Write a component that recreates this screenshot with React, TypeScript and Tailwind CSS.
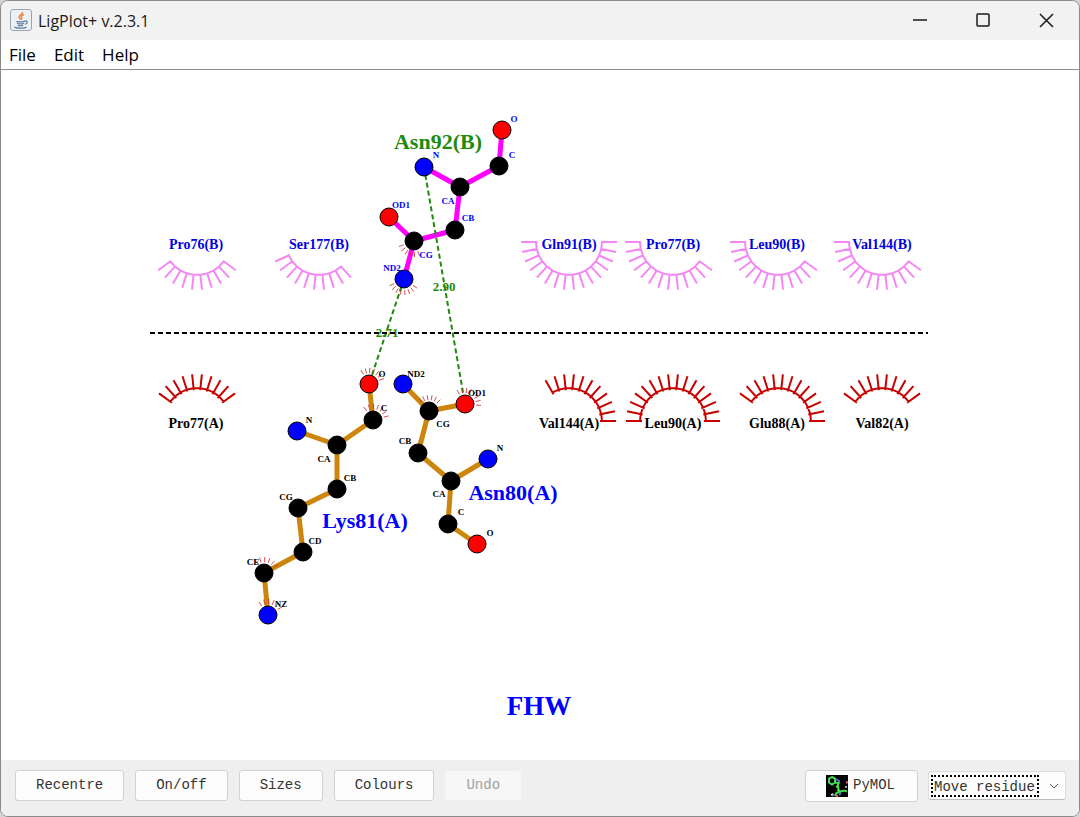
import React, { useState } from 'react';

type Point = [number, number];

interface Atom {
    at: Point;
    color: string;
    label: string;
    labelAt: Point;
    // start and end angle of the contact spikes, in degrees, y pointing down
    spikes?: [number, number];
}

interface Residue {
    name: string;
    nameAt: Point;
    nameColor: string;
    bondColor: string;
    labelColor: string;
    atoms: Atom[];
    bonds: [number, number][];
}

const CARBON = '#000000';
const NITROGEN = '#0000ff';
const OXYGEN = '#ff0000';

const residues: Residue[] = [
    {
        name: 'Asn92(B)',
        nameAt: [438, 149],
        nameColor: '#1f8a0c',
        bondColor: '#ff00ff',
        labelColor: '#0000ff',
        atoms: [
            { at: [424, 167], color: NITROGEN, label: 'N', labelAt: [436, 158] },
            { at: [460, 187], color: CARBON, label: 'CA', labelAt: [448, 204] },
            { at: [499, 166], color: CARBON, label: 'C', labelAt: [512, 158] },
            { at: [502, 130], color: OXYGEN, label: 'O', labelAt: [514, 122] },
            { at: [455, 230], color: CARBON, label: 'CB', labelAt: [468, 221] },
            { at: [414, 241], color: CARBON, label: 'CG', labelAt: [426, 258], spikes: [70, 160] },
            { at: [389, 217], color: OXYGEN, label: 'OD1', labelAt: [401, 208] },
            { at: [404, 279], color: NITROGEN, label: 'ND2', labelAt: [392, 271], spikes: [35, 155] },
        ],
        bonds: [[0, 1], [1, 2], [2, 3], [1, 4], [4, 5], [5, 6], [5, 7]],
    },
    {
        name: 'Lys81(A)',
        nameAt: [365, 528],
        nameColor: '#0000ff',
        bondColor: '#cd850c',
        labelColor: '#000000',
        atoms: [
            { at: [369, 384], color: OXYGEN, label: 'O', labelAt: [382, 377], spikes: [-120, -20] },
            { at: [373, 420], color: CARBON, label: 'C', labelAt: [384, 411], spikes: [-125, -15] },
            { at: [337, 445], color: CARBON, label: 'CA', labelAt: [324, 462] },
            { at: [297, 431], color: NITROGEN, label: 'N', labelAt: [309, 423] },
            { at: [337, 489], color: CARBON, label: 'CB', labelAt: [350, 481] },
            { at: [298, 508], color: CARBON, label: 'CG', labelAt: [286, 500] },
            { at: [303, 552], color: CARBON, label: 'CD', labelAt: [315, 544] },
            { at: [264, 573], color: CARBON, label: 'CE', labelAt: [253, 565], spikes: [-125, -30] },
            { at: [268, 615], color: NITROGEN, label: 'NZ', labelAt: [281, 607], spikes: [-125, -30] },
        ],
        bonds: [[0, 1], [1, 2], [2, 3], [2, 4], [4, 5], [5, 6], [6, 7], [7, 8]],
    },
    {
        name: 'Asn80(A)',
        nameAt: [513, 500],
        nameColor: '#0000ff',
        bondColor: '#cd850c',
        labelColor: '#000000',
        atoms: [
            { at: [403, 384], color: NITROGEN, label: 'ND2', labelAt: [416, 377] },
            { at: [429, 411], color: CARBON, label: 'CG', labelAt: [443, 427], spikes: [-130, -45] },
            { at: [465, 404], color: OXYGEN, label: 'OD1', labelAt: [477, 396], spikes: [-120, 5] },
            { at: [418, 453], color: CARBON, label: 'CB', labelAt: [405, 444] },
            { at: [451, 481], color: CARBON, label: 'CA', labelAt: [439, 497] },
            { at: [488, 459], color: NITROGEN, label: 'N', labelAt: [500, 451] },
            { at: [448, 524], color: CARBON, label: 'C', labelAt: [461, 515] },
            { at: [477, 544], color: OXYGEN, label: 'O', labelAt: [490, 536] },
        ],
        bonds: [[0, 1], [1, 2], [1, 3], [3, 4], [4, 5], [4, 6], [6, 7]],
    },
];

const hydrogenBonds: { from: Point; to: Point; length: string; labelAt: Point }[] = [
    { from: [424, 167], to: [465, 404], length: '2.90', labelAt: [444, 291] },
    { from: [404, 279], to: [369, 384], length: '2.71', labelAt: [387, 337] },
];

// Hydrophobic contacts: lashes are drawn every 12 degrees from `from` to `to`
const contacts = [
    { name: 'Pro76(B)', x: 197, textX: 196, from: 36, to: 144, lower: false },
    { name: 'Ser177(B)', x: 319, textX: 319, from: 48, to: 156, lower: false },
    { name: 'Gln91(B)', x: 569, textX: 569, from: 0, to: 180, lower: false },
    { name: 'Pro77(B)', x: 673, textX: 673, from: 36, to: 180, lower: false },
    { name: 'Leu90(B)', x: 778, textX: 777, from: 36, to: 180, lower: false },
    { name: 'Val144(B)', x: 882, textX: 882, from: 36, to: 180, lower: false },
    { name: 'Pro77(A)', x: 197, textX: 196, from: 36, to: 144, lower: true },
    { name: 'Val144(A)', x: 569, textX: 569, from: 0, to: 120, lower: true },
    { name: 'Leu90(A)', x: 673, textX: 673, from: 0, to: 180, lower: true },
    { name: 'Glu88(A)', x: 778, textX: 777, from: 0, to: 144, lower: true },
    { name: 'Val82(A)', x: 882, textX: 882, from: 36, to: 144, lower: true },
];

function polar([cx, cy]: Point, radius: number, degrees: number): string {
    const a = (degrees * Math.PI) / 180;
    return `${(cx + radius * Math.cos(a)).toFixed(1)} ${(cy + radius * Math.sin(a)).toFixed(1)}`;
}

function Contact({ name, x, textX, from, to, lower }: (typeof contacts)[number]) {
    const center: Point = [x, lower ? 421 : 242];
    const sign = lower ? -1 : 1;
    const angles: number[] = [];
    for (let a = from; a <= to; a += 12) {
        angles.push(a * sign);
    }
    const arc = 'M' + angles.map((a) => polar(center, 33, a)).join('L');
    const lashes = angles.map((a) => `M${polar(center, lower ? 31 : 32, a)}L${polar(center, lower ? 47 : 48, a)}`).join('');
    return (
        <g>
            <path d={arc + lashes} fill="none" stroke={lower ? '#c80000' : '#f587f5'} strokeWidth="2" />
            <text x={textX} y={lower ? 428 : 249} fontSize="14" fill={lower ? '#000000' : '#0000e6'}>{name}</text>
        </g>
    );
}

function Spikes({ at, range }: { at: Point; range: [number, number] }) {
    const count = Math.round((range[1] - range[0]) / 18);
    const step = (range[1] - range[0]) / count;
    const d = Array.from({ length: count + 1 }, (_, i) => range[0] + i * step)
        .map((a) => `M${polar(at, 11, a)}L${polar(at, 16, a)}`)
        .join('');
    return <path d={d} stroke="#d03030" strokeWidth="1" opacity="0.85" />;
}

function Diagram() {
    return (
        <svg
            viewBox="1 70 1078 690"
            className="block w-full flex-1 min-h-0 bg-white font-['Liberation_Serif','Times_New_Roman',serif] font-bold"
            textAnchor="middle"
            role="img"
            aria-label="FHW interaction plot"
        >
            {residues.map((r) => (
                <g key={r.name} stroke={r.bondColor} strokeWidth="5">
                    {r.bonds.map(([a, b]) => (
                        <line key={`${a}-${b}`} x1={r.atoms[a].at[0]} y1={r.atoms[a].at[1]} x2={r.atoms[b].at[0]} y2={r.atoms[b].at[1]} />
                    ))}
                </g>
            ))}

            {hydrogenBonds.map((h) => (
                <g key={h.length}>
                    <line x1={h.from[0]} y1={h.from[1]} x2={h.to[0]} y2={h.to[1]} stroke="#1f8a0c" strokeWidth="2" strokeDasharray="5 3" />
                    <text x={h.labelAt[0]} y={h.labelAt[1]} fontSize="13" fill="#1f8a0c">{h.length}</text>
                </g>
            ))}

            <line x1="150" y1="333" x2="928" y2="333" stroke="#000000" strokeWidth="2" strokeDasharray="5 3" />

            {contacts.map((c) => <Contact key={c.name} {...c} />)}

            {residues.map((r) => (
                <g key={r.name}>
                    {r.atoms.map((atom) => (
                        <g key={atom.label}>
                            {atom.spikes && <Spikes at={atom.at} range={atom.spikes} />}
                            <circle cx={atom.at[0]} cy={atom.at[1]} r="9" fill={atom.color} stroke="#000000" strokeWidth="1" />
                        </g>
                    ))}
                    {r.atoms.map((atom) => (
                        <text key={atom.label} x={atom.labelAt[0]} y={atom.labelAt[1]} fontSize="9" fill={r.labelColor}>{atom.label}</text>
                    ))}
                    <text x={r.nameAt[0]} y={r.nameAt[1]} fontSize="22" fill={r.nameColor}>{r.name}</text>
                </g>
            ))}

            <text x="539" y="715" fontSize="27" fill="#0000ff">FHW</text>
        </svg>
    );
}

function JavaIcon() {
    return (
        <svg viewBox="0 0 22 22" className="size-[22px]" fill="none" aria-hidden="true">
            <rect x="0.5" y="0.5" width="21" height="21" rx="2.5" fill="#edf1f5" stroke="#98a5b3" />
            <path d="M12.5 3c1 2-3.5 3-3.500 5 0 1.200 1.500 1.800 1.700 3M14 5.500c-2 .8-3 1.700-2.700 2.700.2.800.9 1.200.2 2.300" stroke="#ed8a3f" strokeWidth="1.500" />
            <path d="M6.500 12.200c-1.200.8 7 .9 8.800 0M7 14.200c1.500.8 5.500.8 7 0M7.700 16.200c1.500.7 4 .7 5.500 0M5 17.800c-1.500 1.700 10.500 1.700 11.500 0M15.500 12c2.500-.3 2.300 2.500-.5 3.300" stroke="#607d9b" strokeWidth="1.300" />
        </svg>
    );
}

function PymolIcon() {
    return (
        <svg viewBox="0 0 22 22" className="size-[22px]" fill="none" aria-hidden="true">
            <rect width="22" height="22" fill="#000000" />
            <path d="M10 4l3 2v3M14 16l-3-1M8 19l-2 2M15 18l-2 2" stroke="#4570c8" strokeWidth="2" />
            <path d="M6 2l3 1.500v4L6 9.500 3 7.500v-4z" stroke="#43dc4d" strokeWidth="2" />
            <path d="M9 7.500l3 .5v3l-2 1M12 11l1 6-3 1.500-1 2.500M13 17l5-1.500 3 1" stroke="#43dc4d" strokeWidth="2" />
            <path d="M20 8l2-1M10 21h2" stroke="#e05a50" strokeWidth="2" />
            <path d="M5 20l2-1M20 11v2" stroke="#dddddd" strokeWidth="1.500" />
        </svg>
    );
}

const windowButtons = [
    { label: 'Minimize', icon: <path d="M1 8h14" /> },
    { label: 'Maximize', icon: <rect x="2" y="2" width="12" height="12" rx="1" /> },
    { label: 'Close', icon: <path d="M2 2l13 13M15 2L2 15" /> },
];

function TitleBar() {
    return (
        <header className="flex h-[39px] shrink-0 items-center bg-[#f2f2f2] pr-[2px] pb-px pl-[9px]">
            <JavaIcon />
            <h1 className="ml-[6px] flex-1 pt-px text-[16px] text-[#1a1a1a]">LigPlot+ v.2.3.1</h1>
            {windowButtons.map(({ label, icon }) => (
                <button key={label} aria-label={label} className="flex h-full w-[63px] items-center justify-center">
                    <svg viewBox="0 0 16 16" className="size-4 overflow-visible" fill="none" stroke="#1a1a1a" strokeWidth="1.500" aria-hidden="true">{icon}</svg>
                </button>
            ))}
        </header>
    );
}

function MenuBar() {
    return (
        <nav className="flex h-[30px] shrink-0 items-center gap-[18px] border-b border-[#8e8e8e] bg-white px-2 text-[17px] text-black">
            {['File', 'Edit', 'Help'].map((item) => <button key={item}>{item}</button>)}
        </nav>
    );
}

const buttonClasses = 'h-[31px] rounded-[3px] border border-[#d2d2d2] bg-[#fdfdfd] px-5 disabled:h-[29px] disabled:border-[#f7f7f7] disabled:bg-[#f7f7f7] disabled:text-[#a0a0a0]';

function Toolbar() {
    const [mode, setMode] = useState('Move residue');
    return (
        <footer className="flex h-14 shrink-0 items-center bg-[#efefef] pr-[13px] pb-[5px] pl-[14px] font-['Liberation_Mono','Courier_New',monospace] text-[14px] text-[#333333]">
            <div className="flex items-center gap-[11px]">
                {['Recentre', 'On/off', 'Sizes', 'Colours'].map((label) => (
                    <button key={label} className={buttonClasses}>{label}</button>
                ))}
                <button disabled className={buttonClasses}>Undo</button>
            </div>
            <div className="ml-auto flex items-center gap-[10px]">
                <button className="flex h-8 items-center gap-[5px] rounded-[3px] border border-[#d2d2d2] bg-[#fdfdfd] pr-[22px] pl-5">
                    <PymolIcon />
                    PyMOL
                </button>
                <div className="flex h-[29px] items-center rounded-[3px] border border-[#dedede] border-b-[#bdbdbd] bg-[#fdfdfd] pr-[6px] pl-[2px]">
                    <select
                        aria-label="Edit mode"
                        value={mode}
                        onChange={(e) => setMode(e.target.value)}
                        className="h-[22px] w-[108px] appearance-none border-2 border-dotted border-black px-px pb-[2px] outline-none"
                    >
                        <option>Move residue</option>
                        <option>Move atom</option>
                    </select>
                    <svg viewBox="0 0 10 10" className="ml-[10px] size-[10px]" fill="none" stroke="#555555" strokeWidth="1" aria-hidden="true">
                        <path d="M1 3l4 4 4-4" />
                    </svg>
                </div>
            </div>
        </footer>
    );
}

export default function App() {
    return (
        <div className="h-screen bg-[#d4d4d4] font-['Open_Sans','Noto_Sans',sans-serif]">
            <main className="flex h-full flex-col overflow-hidden rounded-lg border border-[#8a8a8a] bg-white">
                <TitleBar />
                <MenuBar />
                <Diagram />
                <Toolbar />
            </main>
        </div>
    );
}
